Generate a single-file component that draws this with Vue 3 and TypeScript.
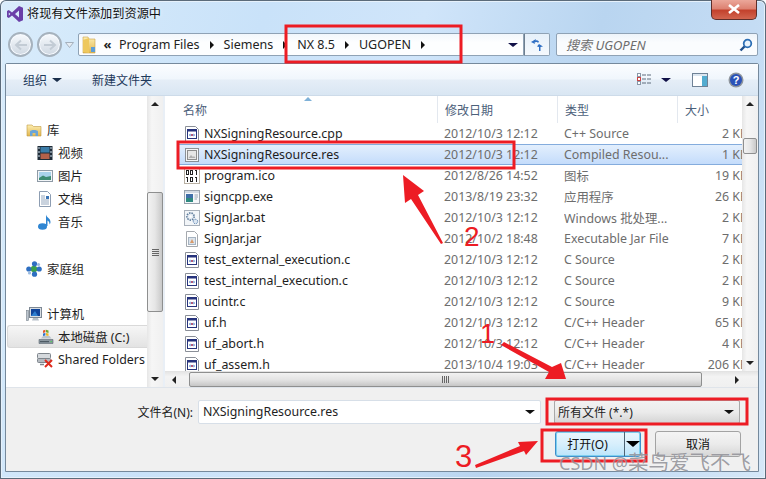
<script setup lang="ts">
interface FileRow { name: string; date: string; type: string; size: string; icon: string; selected?: boolean }
interface NavRow { label: string; icon: string; child?: boolean; gap?: number; selected?: boolean }

const files: FileRow[] = [
  { name: 'NXSigningResource.cpp', date: '2012/10/3 12:12', type: 'C++ Source', size: '2 KB', icon: 'i-src' },
  { name: 'NXSigningResource.res', date: '2012/10/3 12:12', type: 'Compiled Resou...', size: '1 KB', icon: 'i-res', selected: true },
  { name: 'program.ico', date: '2012/8/26 14:52', type: '图标', size: '19 KB', icon: 'i-bin' },
  { name: 'signcpp.exe', date: '2013/8/19 23:32', type: '应用程序', size: '26 KB', icon: 'i-exe' },
  { name: 'SignJar.bat', date: '2012/10/3 12:12', type: 'Windows 批处理...', size: '2 KB', icon: 'i-bat' },
  { name: 'SignJar.jar', date: '2012/10/2 18:48', type: 'Executable Jar File', size: '7 KB', icon: 'i-jar' },
  { name: 'test_external_execution.c', date: '2012/10/3 12:12', type: 'C Source', size: '2 KB', icon: 'i-src' },
  { name: 'test_internal_execution.c', date: '2012/10/3 12:12', type: 'C Source', size: '2 KB', icon: 'i-src' },
  { name: 'ucintr.c', date: '2012/10/3 12:12', type: 'C Source', size: '9 KB', icon: 'i-src' },
  { name: 'uf.h', date: '2012/10/3 12:12', type: 'C/C++ Header', size: '65 KB', icon: 'i-src' },
  { name: 'uf_abort.h', date: '2012/10/3 12:12', type: 'C/C++ Header', size: '4 KB', icon: 'i-src' },
  { name: 'uf_assem.h', date: '2013/10/4 19:03', type: 'C/C++ Header', size: '206 KB', icon: 'i-src' }
]

const nav: NavRow[] = [
  { label: '库', icon: 'i-lib' },
  { label: '视频', icon: 'i-video', child: true },
  { label: '图片', icon: 'i-pic', child: true },
  { label: '文档', icon: 'i-doc', child: true },
  { label: '音乐', icon: 'i-music', child: true },
  { label: '家庭组', icon: 'i-home', gap: 24 },
  { label: '计算机', icon: 'i-pc', gap: 22 },
  { label: '本地磁盘 (C:)', icon: 'i-disk', child: true, selected: true },
  { label: 'Shared Folders', icon: 'i-share', child: true }
]
</script>

<template>
  <div class="window">
    <svg class="defs" aria-hidden="true">
      <defs>
        <linearGradient id="g-folder" x1="0" y1="0" x2="0" y2="1"><stop offset="0" stop-color="#fdeeb0"/><stop offset="1" stop-color="#e2b64e"/></linearGradient>
      </defs>
      <symbol id="i-src" viewBox="0 0 16 16">
        <path d="M1.500.5h10l3 3v12h-13z" fill="#fff" stroke="#8a8f98"/>
        <rect x="3.500" y="3.500" width="9" height="9" fill="#fff" stroke="#26337c"/>
        <rect x="3.500" y="3.500" width="9" height="2" fill="#26337c"/>
        <path d="M5 9l1.500-1.500v3zM11 9L9.500 7.500v3z" fill="#2f6fc0"/>
        <rect x="7" y="8" width="2" height="2" fill="#b25a7c"/>
      </symbol>
      <symbol id="i-res" viewBox="0 0 16 16">
        <rect x="1.500" y="1.500" width="13" height="13" fill="#f4f6f8" stroke="#333" stroke-dasharray="1 1"/>
        <rect x="3.500" y="3.500" width="9" height="9" fill="#e6e6e6" stroke="#8d8d8d"/>
        <path d="M4.500 11l2.500-3 2 2 1-1 1.500 2z" fill="#b0b0b0"/>
      </symbol>
      <symbol id="i-bin" viewBox="0 0 16 16">
        <rect x=".5" y=".5" width="15" height="15" fill="#fff" stroke="#b9b1a4"/>
        <path d="M2 2h3v5H2zM3 3v3h1V3zM6 2h3v5H6zM7 3v3h1V3zM11 2h2v5h-1V3h-1zM3 9h1v5H3zM2 9h1v1H2zM6 9h3v5H6zM7 10v3h1v-3zM11 9h2v5h-1v-4h-1z" fill="#222"/>
      </symbol>
      <symbol id="i-exe" viewBox="0 0 16 16">
        <rect x=".5" y="1.500" width="15" height="13" fill="#f5f7fa" stroke="#98a2ad"/>
        <rect x="1" y="2" width="14" height="2" fill="#d2dae3"/>
        <rect x="2" y="5" width="7" height="8" fill="#2f8a80"/>
        <rect x="2" y="5" width="7" height="4" fill="#3f6fa8"/>
        <path d="M10.500 6H14M10.500 8H14M10.500 10H13" stroke="#9aa7b5"/>
      </symbol>
      <symbol id="i-bat" viewBox="0 0 16 16">
        <rect x=".5" y=".5" width="15" height="15" fill="#f2f5f8" stroke="#a8b0ba"/>
        <circle cx="6.500" cy="6.500" r="3.600" fill="#e6ecf3" stroke="#5f7d9c" stroke-width="1.600" stroke-dasharray="1.500 1"/>
        <circle cx="6.500" cy="6.500" r="1.200" fill="#fff"/>
        <circle cx="11.500" cy="11.500" r="2.200" fill="#dbe6f1" stroke="#4d77a8" stroke-dasharray="1 .8"/>
      </symbol>
      <symbol id="i-jar" viewBox="0 0 16 16">
        <path d="M2.500.5h8l3 3v12h-11z" fill="#fff" stroke="#a5a9ae"/>
        <rect x="4.500" y="6.500" width="7" height="7" fill="#dbe3ec" stroke="#a6b3c0"/>
        <path d="M6 12l2-4 2 4z" fill="#d89a6a"/>
      </symbol>
      <symbol id="i-lib" viewBox="0 0 16 16">
        <path d="M1 3h5l1.500 1.500H15V14H1z" fill="url(#g-folder)" stroke="#c19a45" stroke-width=".6"/>
        <path d="M4 14V9.500C4 7.500 12 7.500 12 9.500V14h-2.500v-3h-3v3z" fill="#69a5d8"/>
      </symbol>
      <symbol id="i-video" viewBox="0 0 16 16">
        <rect x=".5" y="1" width="15" height="14" fill="#1f2c38"/>
        <rect x="3.500" y="2" width="9" height="5.500" fill="#3b7ca8"/>
        <rect x="3.500" y="8.500" width="9" height="5.500" fill="#b5614a"/>
        <path d="M1.500 2h1v2h-1zM1.500 6h1v2h-1zM1.500 10h1v2h-1zM13.500 2h1v2h-1zM13.500 6h1v2h-1zM13.500 10h1v2h-1z" fill="#cfe1ef"/>
      </symbol>
      <symbol id="i-pic" viewBox="0 0 16 16">
        <rect x=".5" y="2.500" width="15" height="11" fill="#f2f5f8" stroke="#8e9aa6"/>
        <rect x="2" y="4" width="12" height="8" fill="#a9d2ea"/>
        <path d="M2 10l4-2.500 3 1.500 5-1v4H2z" fill="#3d8b72"/>
      </symbol>
      <symbol id="i-doc" viewBox="0 0 16 16">
        <path d="M2.500.5h8l3 3v12h-11z" fill="#fff" stroke="#8d9db2"/>
        <path d="M4 5h4M4 7h4M4 9h8M4 11h8M4 13h8" stroke="#93a6bd"/>
        <rect x="9" y="5" width="3" height="3" fill="#3a74b5"/>
      </symbol>
      <symbol id="i-music" viewBox="0 0 16 16">
        <ellipse cx="5.500" cy="12.500" rx="4.500" ry="3.300" fill="#2f86d3"/>
        <path d="M9 12V.5c.5 3 4.500 3.500 4.500 7.500 0 1-.5 2-1 2.500.3-2-1-3.500-2-4V12z" fill="#2f86d3"/>
      </symbol>
      <symbol id="i-home" viewBox="0 0 16 16">
        <circle cx="8" cy="8" r="3.200" fill="#3aa14a"/>
        <circle cx="8.500" cy="2.800" r="2.600" fill="#2e6fc2"/>
        <circle cx="2.800" cy="8" r="2.600" fill="#2e6fc2"/>
        <circle cx="13.200" cy="8" r="2.600" fill="#2e6fc2"/>
        <circle cx="8.500" cy="13.200" r="2.600" fill="#2e6fc2"/>
        <circle cx="12.500" cy="3.500" r="1.600" fill="#9bbbe0"/>
        <circle cx="3.500" cy="12" r="1.600" fill="#9bbbe0"/>
      </symbol>
      <symbol id="i-pc" viewBox="0 0 16 16">
        <rect x="3.500" y="1.500" width="12" height="10" fill="#d7dde3" stroke="#7d8894"/>
        <rect x="5" y="3" width="9" height="7" fill="#10449a"/>
        <path d="M5 10l4-5 3 5z" fill="#2e7fd0"/>
        <rect x=".5" y="4.500" width="2" height="10" fill="#bcc5ce" stroke="#77818b" stroke-width=".6"/>
        <path d="M7 12h5l1 2.500H6z" fill="#b7c0c9"/>
      </symbol>
      <symbol id="i-disk" viewBox="0 0 16 16">
        <path d="M1 10.500h14v4H1z" fill="#8b97a0" stroke="#5c6770" stroke-width=".6"/>
        <rect x="2" y="12" width="9" height="1.200" fill="#4d5a63"/>
        <rect x="12.500" y="12" width="1.500" height="1.200" fill="#53d05a"/>
        <path d="M3 9.500l2-2.500h6.500l2 2.500z" fill="#bac4cc"/>
        <path d="M5 1.500l2.400-.8v2.600L5 4z" fill="#e2562e"/>
        <path d="M8 .7l2.500.7v2.500L8 3.300z" fill="#6aa82f"/>
        <path d="M5 4.500l2.400-.6v2.500L5 7z" fill="#2f73c9"/>
        <path d="M8 4l2.500.5V7L8 6.400z" fill="#edb822"/>
      </symbol>
      <symbol id="i-share" viewBox="0 0 16 16">
        <rect x=".5" y="1.500" width="13" height="5" rx="1" fill="#d5d9dd" stroke="#7e858c"/>
        <rect x=".5" y="6.500" width="13" height="4" rx="1" fill="#b4bac0" stroke="#7e858c"/>
        <path d="M3 12.500h4" stroke="#7e858c" stroke-width="1.500"/>
        <path d="M8 8l7 7M15 8l-7 7" stroke="#de2a1c" stroke-width="2"/>
      </symbol>
    </svg>

    <header class="titlebar">
      <svg class="vs-logo" viewBox="0 0 18 18" width="18" height="18">
        <path d="M13 1l4 1.800v12.400L13 17 6 10.500 2.800 13 1 12V6l1.800-1L6 7.500zM13 5.500L9 9l4 3.500zM2.800 7.500v3L4.400 9z" fill="#6a3fa8" fill-rule="evenodd"/>
      </svg>
      <span class="title">将现有文件添加到资源中</span>
      <button class="close" type="button">
        <svg viewBox="0 0 14 10" width="14" height="10"><path d="M2 1l10 8M12 1L2 9" stroke="#fff" stroke-width="2.600"/></svg>
      </button>
    </header>

    <div class="navbar">
      <span class="orb"><svg viewBox="0 0 14 12" width="14" height="12"><path d="M13 6H3M7 1.500L2 6l5 4.500" fill="none" stroke="#c3ccd5" stroke-width="2"/></svg></span>
      <span class="orb orb-2"><svg viewBox="0 0 14 12" width="14" height="12"><path d="M1 6h10M7 1.500L12 6l-5 4.500" fill="none" stroke="#c3ccd5" stroke-width="2"/></svg></span>
      <svg class="chev" viewBox="0 0 9 6" width="9" height="6"><path d="M.5.500h8L4.500 5.500z" fill="#e6edf4" stroke="#a5b1bd"/></svg>
      <div class="address">
        <svg class="folder" viewBox="0 0 14 18" width="14" height="18">
          <path d="M1 1h5l1 2h6v14H1z" fill="url(#g-folder)" stroke="#c9a24c" stroke-width=".6"/>
          <path d="M1 4l6-2v15l-6-1z" fill="#eec85e"/>
          <rect x="9" y="11" width="4" height="5" fill="#5c9ed8"/>
        </svg>
        <span class="crumb-more">«</span>
        <span class="crumb">Program Files</span><i class="tri"></i>
        <span class="crumb">Siemens</span><i class="tri"></i>
        <span class="crumb">NX 8.5</span><i class="tri"></i>
        <span class="crumb">UGOPEN</span><i class="tri"></i>
        <i class="drop addr-drop"></i>
      </div>
      <div class="refresh">
        <svg viewBox="0 0 14 14" width="14" height="14"><path d="M6 1L1 4l4 2-.5-1.500C6 3.500 7.500 4 8 5l1-1.500C8 2.500 7 2 5.500 2.500z" fill="#2f6fc4"/><path d="M9 6l4 2.500-2.500.5V13H9V9L7 8.500z" fill="#2f6fc4"/></svg>
      </div>
      <div class="search">
        <span>搜索 UGOPEN</span>
        <svg viewBox="0 0 14 14" width="14" height="14"><circle cx="8.500" cy="5.500" r="3.800" fill="#e9f3fc" stroke="#2d6fb5" stroke-width="1.800"/><path d="M5.500 8.500L1.500 12.500" stroke="#1e4f8c" stroke-width="2.400"/></svg>
      </div>
    </div>

    <div class="panel">
      <div class="toolbar">
        <span class="tool">组织</span><i class="drop tool-drop"></i>
        <span class="tool tool-new">新建文件夹</span>
        <span class="tool-right">
          <svg viewBox="0 0 15 13" width="15" height="13"><rect x=".5" y=".5" width="3" height="3" fill="#fff" stroke="#8a98a8"/><rect x=".5" y="4.500" width="3" height="3" fill="#fff" stroke="#c44"/><rect x=".5" y="8.500" width="3" height="3" fill="#fff" stroke="#8a98a8"/><path d="M5 2h4M10 2h4M5 6h4M10 6h4M5 10h4M10 10h4" stroke="#5e6d7c"/></svg>
          <i class="drop view-drop"></i>
          <svg class="pane-ic" viewBox="0 0 16 14" width="16" height="14"><rect x=".5" y=".5" width="15" height="13" fill="#fff" stroke="#6f8296"/><rect x="10" y="1" width="5" height="12" fill="#53acd0"/><rect x="1" y="1" width="14" height="2" fill="#dbe6f0"/></svg>
          <svg class="help-ic" viewBox="0 0 16 16" width="16" height="16"><circle cx="8" cy="8" r="7.500" fill="#8e959d"/><circle cx="8" cy="8" r="6" fill="#2a52b8"/><text x="8" y="12" text-anchor="middle" font-size="11" font-weight="700" fill="#fff" font-family="Liberation Sans, sans-serif">?</text></svg>
        </span>
      </div>

      <div class="content">
        <aside class="sidebar">
          <div
            v-for="n in nav"
            :key="n.label"
            class="nav-row"
            :class="{ child: n.child, active: n.selected }"
            :style="n.gap ? { marginTop: n.gap + 'px' } : undefined"
          >
            <svg class="ic"><use :href="'#' + n.icon" /></svg>
            <span>{{ n.label }}</span>
          </div>
        </aside>

        <div class="vbar side-bar">
          <i class="arrow up"></i>
          <div class="track"><div class="thumb side-thumb"><b></b></div></div>
          <i class="arrow down"></i>
        </div>

        <div class="split"></div>

        <section class="list-area">
          <div class="list-main">
            <div class="list-col">
              <div class="head">
                <span class="h-name">名称</span>
                <i class="sort"></i>
                <span class="h-date">修改日期</span>
                <span class="h-type">类型</span>
                <span class="h-size">大小</span>
              </div>
              <div class="rows">
                <div v-for="f in files" :key="f.name" class="row" :class="{ sel: f.selected }">
                  <svg class="ic file-ic"><use :href="'#' + f.icon" /></svg>
                  <span class="c-name">{{ f.name }}</span>
                  <span class="c-date">{{ f.date }}</span>
                  <span class="c-type">{{ f.type }}</span>
                  <span class="c-size">{{ f.size }}</span>
                </div>
              </div>
            </div>
            <div class="vbar list-bar">
              <i class="arrow up"></i>
              <div class="track"><div class="thumb list-thumb"></div></div>
              <i class="arrow down"></i>
            </div>
          </div>
          <div class="hbar">
            <i class="arrow left"></i>
            <div class="hthumb"><b></b></div>
            <i class="arrow right"></i>
          </div>
        </section>
      </div>

      <footer class="bottom">
        <div class="form-row">
          <label class="fname-label">文件名(N):</label>
          <div class="fname"><span>NXSigningResource.res</span><i class="drop"></i></div>
          <div class="ftype"><span>所有文件 (*.*)</span><i class="drop"></i></div>
        </div>
        <div class="btn-row">
          <div class="btn open"><span class="open-text">打开(O)</span><span class="open-arrow"><i class="drop big"></i></span></div>
          <div class="btn cancel">取消</div>
        </div>
      </footer>
    </div>

    <svg class="marks" viewBox="0 0 766 479" width="766" height="479">
      <g fill="none" stroke="#ed1c24" stroke-width="3">
        <rect x="286" y="26" width="175" height="36"/>
        <rect x="178" y="142" width="336" height="26"/>
        <rect x="547" y="399" width="200" height="25"/>
        <rect x="542" y="430" width="104" height="31"/>
      </g>
      <g fill="#ed1c24">
        <path d="M403 175L424 191 418 195 443 243 441 244 411 199 405 203z"/>
        <path d="M501 345L504 342 552 367 561 363 566 379 545 379 549 372z"/>
        <path d="M476 468L475 465 520 446 518 442 538 441 526 455 524 451z"/>
        <text x="464" y="246" class="num">2</text>
        <text x="480" y="343" class="num num-1">1</text>
        <text x="455" y="467" class="num num-3">3</text>
      </g>
    </svg>
    <div class="watermark">CSDN @<span class="wm-cjk">菜鸟爱飞不飞</span></div>
  </div>
</template>

<style>
html, body { margin: 0; padding: 0; overflow: hidden; }
</style>

<style scoped>
.window {
  position: relative;
  width: 766px;
  height: 479px;
  box-sizing: border-box;
  overflow: hidden;
  display: flex;
  flex-direction: column;
  font-family: "Noto Sans", "Noto Sans CJK SC", sans-serif;
  font-size: 12px;
  color: #1e1e1e;
  background:
    linear-gradient(105deg, #d9ecfb 0%, #c9e2f9 30%, #d0e5fa 48%, #b9d5f0 68%, #c4dcf4 85%, #d6e8f8 100%);
  border-radius: 6px 6px 0 0;
  box-shadow: inset 0 0 0 1px #5b6b7a, inset 0 0 0 2px #e6f1fb;
}
.defs { position: absolute; width: 0; height: 0; }
.titlebar { display: flex; align-items: center; height: 28px; padding-left: 5px; flex: none; }
.vs-logo { margin-left: 1px; }
.title { margin-left: 3px; font-size: 12.200px; color: #111; text-shadow: 0 0 4px #fff; position: relative; top: -1px; }
.close {
  margin: -9px 9px 0 auto;
  width: 46px;
  height: 20px;
  padding: 0;
  border: 1px solid #5d2e2a;
  border-top: 0;
  border-radius: 0 0 5px 5px;
  background: linear-gradient(#eba79a 0%, #dd8272 45%, #c3422d 55%, #d2654f 100%);
  display: flex;
  align-items: center;
  justify-content: center;
}
.navbar { display: flex; align-items: center; height: 35px; flex: none; padding: 0 0 2px 8px; box-sizing: border-box; }
.orb {
  width: 25px; height: 25px; box-sizing: border-box;
  border-radius: 50%;
  border: 2px solid #a6b2bd;
  background: linear-gradient(#f7fafd, #cfd8e2);
  display: flex; align-items: center; justify-content: center;
  box-shadow: inset 0 0 0 1px #f8fbff;
}
.orb-2 { margin-left: 4px; }
.chev { margin-left: 3px; margin-right: 4px; }
.address {
  width: 446px; height: 23px; box-sizing: border-box;
  display: flex; align-items: center;
  border: 1px solid #8fa2b5;
  border-radius: 2px 0 0 2px;
  background: linear-gradient(#f2f7fc, #fdfeff 40%);
  color: #222;
  font-size: 12.500px;
}
.folder { margin-left: 3px; }
.crumb-more { width: 23px; text-align: center; font-weight: 700; line-height: 1; font-size: 13px; }
.crumb { white-space: nowrap; }
.tri {
  width: 0; height: 0; margin: 0 10px;
  border-left: 4px solid #111; border-top: 4px solid transparent; border-bottom: 4px solid transparent;
}
.drop {
  display: block; width: 0; height: 0;
  border-top: 4px solid #111148; border-left: 5px solid transparent; border-right: 5px solid transparent;
}
.addr-drop { margin-left: auto; margin-right: 5px; }
.refresh {
  width: 26px; height: 23px; box-sizing: border-box;
  border: 1px solid #8fa2b5; border-left-color: #6d7f90;
  border-radius: 0 2px 2px 0;
  background: linear-gradient(#e6f0fa, #f5f9fd);
  display: flex; align-items: center; justify-content: center;
}
.search {
  margin-left: 6px; width: 202px; height: 23px; box-sizing: border-box;
  display: flex; align-items: center; justify-content: space-between;
  padding: 0 4px 0 9px;
  border: 1px solid #8fa2b5; border-radius: 2px;
  background: linear-gradient(#eef4fa, #fafcfe 40%);
  color: #6d6d6d; font-style: italic; font-size: 13px;
}
.panel {
  margin: 0 7px 0 5px;
  height: 409px;
  flex: none;
  box-sizing: border-box;
  border: 1px solid #75899c;
  border-radius: 2px 2px 0 0;
  display: flex; flex-direction: column;
  background: #fff;
}
.toolbar {
  height: 32px; flex: none; box-sizing: border-box;
  display: flex; align-items: center;
  padding-left: 17px;
  background: linear-gradient(#fbfdff 0%, #f0f6fc 48%, #e5eef7 52%, #d9e6f3 100%);
  border-bottom: 1px solid #cddbe9;
  color: #1e395b;
}
.tool-drop { margin-left: 5px; border-top-color: #1b2f4b; }
.tool-new { margin-left: 30px; }
.tool-right { margin-left: auto; display: flex; align-items: center; padding-right: 14px; }
.view-drop { margin-left: 9px; }
.pane-ic { margin-left: 21px; }
.help-ic { margin-left: 20px; }
.content { height: 291px; flex: none; display: flex; overflow: hidden; }
.sidebar { width: 141px; flex: none; padding-top: 22px; box-sizing: border-box; overflow: hidden; font-size: 12.400px; }
.nav-row { display: flex; align-items: center; height: 23px; padding-left: 20px; white-space: nowrap; box-sizing: border-box; }
.nav-row .ic { margin-right: 5px; }
.nav-row.child { padding-left: 31px; }
.nav-row.active {
  margin-left: 1px; padding-left: 30px;
  background: linear-gradient(#f6f6f6, #e3e3e3);
  border: 1px solid #d9d9d9; border-right: 0; border-radius: 3px 0 0 3px;
}
.nav-row.active span { position: relative; left: -1px; }
.ic { width: 16px; height: 16px; flex: none; display: block; }
.vbar {
  width: 16px; flex: none; display: flex; flex-direction: column; align-items: stretch;
  background: linear-gradient(90deg, #e6e6e6, #f6f6f6 30%, #f0f0f0);
}
.track { flex: 1; min-height: 0; }
.arrow { display: block; width: 0; height: 0; flex: none; }
.up { margin: 6px auto 6px; border-bottom: 4px solid #222; border-left: 4px solid transparent; border-right: 4px solid transparent; }
.down { margin: 6px auto 6px; border-top: 4px solid #222; border-left: 4px solid transparent; border-right: 4px solid transparent; }
.thumb {
  box-sizing: border-box; border: 1px solid #8e8f8f; border-radius: 2px;
  background: linear-gradient(90deg, #f2f2f2, #e6e6e6 50%, #c9c9c9);
  display: flex; align-items: center; justify-content: center;
}
.thumb b { display: block; width: 7px; height: 7px; background: repeating-linear-gradient(#666 0 1px, transparent 1px 2px); }
.side-thumb { margin-top: 80px; height: 120px; }
.list-thumb { margin-top: 26px; height: 16px; margin-left: 1px; margin-right: 1px; }
.split { width: 2px; flex: none; background: #e9eff6; }
.list-area { flex: 1; min-width: 0; display: flex; flex-direction: column; }
.list-main { flex: 1; min-height: 0; display: flex; }
.list-col { flex: 1; min-width: 0; display: flex; flex-direction: column; }
.head {
  position: relative; height: 27px; flex: none; display: flex; align-items: center;
  color: #4c607a; white-space: nowrap;
}
.head span { box-sizing: border-box; height: 100%; display: flex; align-items: center; padding: 0 0 0 7px; border-right: 1px solid #e3e8ef; }
.head .h-name { width: 273px; padding-left: 18px; }
.head .h-date { width: 120px; }
.head .h-type { width: 120px; }
.head .h-size { flex: 1; border-right: 0; }
.sort {
  position: absolute; left: 139px; top: 1px; width: 0; height: 0;
  border-bottom: 4px solid #7fb1d8; border-left: 4px solid transparent; border-right: 4px solid transparent;
}
.rows { flex: 1; min-height: 0; overflow: hidden; padding-left: 14px; font-size: 12.400px; }
.row {
  display: flex; align-items: center; height: 21px; box-sizing: border-box;
  white-space: nowrap; color: #6d6d6d;
}
.row.sel {
  background: linear-gradient(#e3effd, #c4dcfb);
  border-top: 1px solid #84acdd; border-bottom: 1px solid #84acdd;
}
.file-ic { margin-left: 5px; width: 16px; height: 16px; }
.c-name { width: 240px; margin-left: 4px; color: #1e1e1e; }
.c-date { width: 120px; }
.c-type { width: 120px; overflow: hidden; }
.c-size { width: 64px; text-align: right; overflow: hidden; position: relative; left: 9px; margin-left: -9px; }
.hbar {
  height: 16px; flex: none; display: flex; align-items: center;
  background: linear-gradient(#e6e6e6, #f3f3f3 30%, #f0f0f0);
  border-top: 1px solid #e3e3e3;
  box-sizing: border-box;
}
.left { margin: 0 6px 0 7px; border-right: 4px solid #222; border-top: 4px solid transparent; border-bottom: 4px solid transparent; }
.right { margin-left: 33px; border-left: 4px solid #222; border-top: 4px solid transparent; border-bottom: 4px solid transparent; }
.hthumb {
  width: 513px; height: 15px; box-sizing: border-box; border: 1px solid #8e8f8f; border-radius: 2px; margin-left: 7px;
  background: linear-gradient(#f2f2f2, #e4e4e4 50%, #c6c6c6);
  display: flex; align-items: center; justify-content: center;
}
.hthumb b { display: block; width: 7px; height: 7px; background: repeating-linear-gradient(90deg, #666 0 1px, transparent 1px 2px); }
.bottom { flex: 1; min-height: 0; background: #f0f0f0; border-top: 1px solid #dfe4ea; box-sizing: border-box; padding-top: 11px; }
.form-row { display: flex; align-items: center; height: 25px; }
.fname-label { width: 187px; text-align: right; flex: none; color: #222; }
.fname {
  margin-left: 5px; width: 343px; height: 24px; box-sizing: border-box; flex: none;
  display: flex; align-items: center; justify-content: space-between;
  padding: 0 4px; background: #fff; border: 1px solid #d7dfe8; border-radius: 2px; color: #1e1e1e; font-size: 12.400px;
}
.fname .drop, .ftype .drop { border-top-color: #111; margin-right: 1px; }
.ftype {
  margin-left: 13px; width: 186px; height: 24px; box-sizing: border-box; flex: none;
  display: flex; align-items: center; justify-content: space-between;
  padding: 0 4px 0 3px; border: 1px solid #a8a8a8; border-radius: 2px; color: #222;
  background: linear-gradient(#f2f2f2, #ebebeb 50%, #d4d4d4);
}
.btn-row { display: flex; margin-top: 7px; padding-left: 549px; }
.btn {
  height: 26px; box-sizing: border-box; border-radius: 3px;
  display: flex; align-items: center; justify-content: center; color: #111;
}
.open {
  width: 86px; border: 1px solid #3c8ecb;
  background: linear-gradient(#eaf6fd, #d7effc 50%, #bce5fb);
  box-shadow: inset 0 0 0 1px #7fd0ef;
  justify-content: flex-start;
}
.open-text { width: 63px; text-align: center; margin-right: 5px; }
.open-arrow { height: 100%; flex: 1; border-left: 1px solid #4d6474; display: flex; align-items: center; justify-content: center; }
.drop.big { border-top: 6px solid #000; border-left: 7px solid transparent; border-right: 7px solid transparent; }
.cancel {
  margin-left: 14px; width: 86px; border: 1px solid #a3a3a3;
  background: linear-gradient(#f4f4f4, #ebebeb 50%, #d6d6d6);
}
.marks { position: absolute; left: 0; top: 0; pointer-events: none; }
.num { font-family: "Liberation Sans", sans-serif; font-size: 28px; }
.num-1 { font-size: 27px; }
.num-3 { font-size: 31px; }
.watermark {
  position: absolute; left: 559px; top: 449px; font-size: 18px; line-height: 26px;
  color: rgba(105, 105, 115, .65); white-space: nowrap; text-shadow: 0 0 1px rgba(255,255,255,.7);
}
.wm-cjk { font-size: 20.500px; }
</style>
